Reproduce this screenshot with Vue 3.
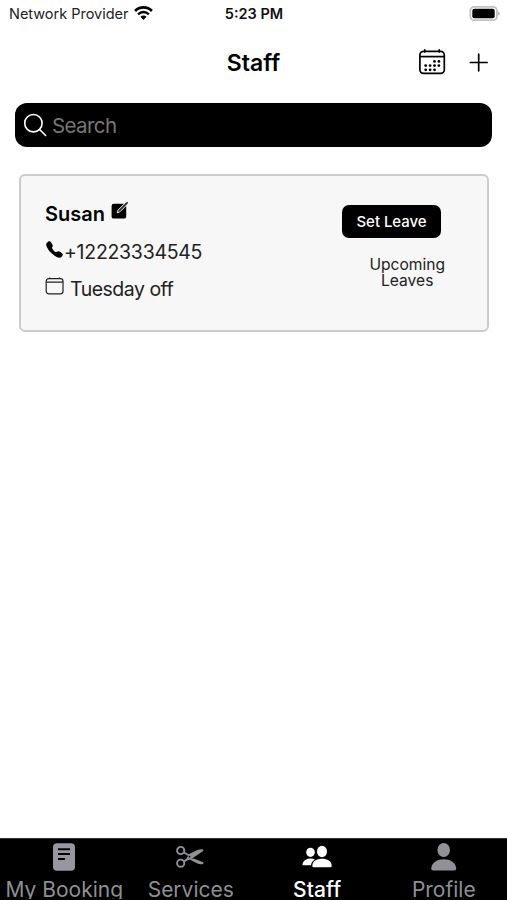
<script setup>
const dots = [
  [16.2, 13], [20.6, 13],
  [7.4, 17.2], [11.8, 17.2], [16.2, 17.2], [20.6, 17.2],
  [7.4, 21.4], [11.8, 21.4], [16.2, 21.4]
]
</script>

<template>
  <div class="screen">
    <div class="status">
      <div class="carrier">
        <span class="carrier-name">Network Provider</span>
        <svg class="wifi" width="19" height="14" viewBox="0 0 18 14">
          <path d="M.6 5A11.600 11.600 0 0 1 17.400 5" fill="none" stroke="#000" stroke-width="2.7" />
          <path d="M3.600 8.300A7.600 7.600 0 0 1 14.400 8.300" fill="none" stroke="#000" stroke-width="2.400" />
          <path d="M6 10.800A4.200 4.200 0 0 1 12 10.800L9 14Z" fill="#000" />
        </svg>
      </div>
      <span class="time">5:23 PM</span>
      <svg class="battery" width="31" height="15" viewBox="0 0 31 15">
        <rect x="1.300" y=".8" width="26.6" height="13.4" rx="4" fill="#fff" stroke="#c2c2c2" stroke-width="1.800" />
        <rect x="3.300" y="2.8" width="22.4" height="9.4" rx="2" fill="#000" />
        <path d="M28.8 5.2Q30.9 6 30.9 7.5T28.8 9.8Z" fill="#b9b9b9" />
      </svg>
    </div>

    <header class="header">
      <h1 class="title">Staff</h1>
      <div class="actions">
        <svg width="28" height="28" viewBox="0 0 28 28">
          <g fill="none" stroke="#000" stroke-width="1.7">
            <rect x="1.900" y="2.400" width="24.4" height="22" rx="3.6" />
            <path d="M1.900 7.600H26.300" />
            <path d="M6.8 .9V3M21.2 .9V3" stroke-linecap="round" />
          </g>
          <circle v-for="(d, i) in dots" :key="i" :cx="d[0] + 0.3" :cy="d[1] - 0.6" r="1.4" />
        </svg>
        <svg width="20" height="20" viewBox="0 0 20 20">
          <path d="M9.700 1.200V17.800M1.300 9.500H18.100" fill="none" stroke="#000" stroke-width="1.700" stroke-linecap="round" />
        </svg>
      </div>
    </header>

    <div class="search">
      <svg width="24" height="24" viewBox="0 0 24 24" fill="none" stroke="#fff" stroke-width="1.6" stroke-linecap="round">
        <circle cx="10.400" cy="10.200" r="8.700" />
        <path d="M16.600 16.500L22.600 22.500" />
      </svg>
      <span class="placeholder">Search</span>
    </div>

    <section class="card">
      <div class="info">
        <div class="name-row">
          <span class="name">Susan</span>
          <svg class="edit" width="18" height="19" viewBox="0 0 18 19">
            <rect x=".6" y="2.8" width="14.6" height="14.8" rx="2.2" />
            <path d="M6.2 11.8L7.2 9L15.4 .8L17.2 2.5L8.9 10.8Z" fill="#333" stroke="#f7f7f7" stroke-width="1" stroke-linejoin="round" />
            <path d="M7.500 10.500L16.800 1.200" stroke="#333" stroke-width="1.100" />
          </svg>
        </div>
        <div class="phone-row">
          <svg class="phone-icon" width="19" height="19" viewBox="0 0 512 512">
            <path d="M391 480c-19.520 0-46.940-7.060-88-30-49.930-28-88.550-53.850-138.210-103.380C116.910 298.770 93.610 267.790 61 208.450c-36.840-67-30.560-102.120-23.540-117.130C45.820 73.380 58.160 62.650 74.110 52a176.300 176.300 0 0 1 28.640-15.200c1-.43 1.930-.84 2.760-1.210 4.950-2.230 12.450-5.600 21.950-2 6.340 2.380 12 7.250 20.860 16 18.170 17.920 43 57.830 52.160 77.430 6.150 13.210 10.220 21.930 10.230 31.710 0 11.450-5.760 20.280-12.750 29.810-1.310 1.790-2.610 3.500-3.870 5.160-7.610 10-9.280 12.890-8.180 18.050 2.230 10.370 18.860 41.240 46.190 68.510s57.310 42.850 67.720 45.070c5.380 1.150 8.330-.59 18.650-8.470 1.480-1.130 3-2.300 4.590-3.470 10.660-7.930 19.080-13.540 30.260-13.540h.06c9.730 0 18.060 4.220 31.860 11.180 18 9.080 59.110 33.590 77.140 51.780 8.770 8.840 13.660 14.480 16.050 20.810 3.600 9.530.21 17-2 22-.37.83-.78 1.740-1.210 2.750a176.490 176.490 0 0 1-15.290 28.580c-10.630 15.900-21.400 28.210-39.380 36.580A67.420 67.420 0 0 1 391 480z" />
          </svg>
          <span class="phone">+12223334545</span>
        </div>
        <div class="off-row">
          <svg class="cal" width="19" height="19" viewBox="0 0 19 19" fill="none" stroke="#222" stroke-width="1.2">
            <rect x="1.200" y="1.700" width="16.8" height="15.2" rx="2.6" />
            <path d="M1.200 5.100H18M4.700 .4V1.900M14.500 .4V1.900" />
          </svg>
          <span class="off">Tuesday off</span>
        </div>
      </div>
      <div class="leave">
        <button class="set">Set Leave</button>
        <div class="upcoming">
          <span>Upcoming</span>
          <span>Leaves</span>
        </div>
      </div>
    </section>

    <nav class="tabs">
      <div class="tab">
        <svg width="30" height="30" viewBox="0 0 30 30">
          <rect x="4" y="1.200" width="22" height="27.600" rx="4" fill="#98979f" />
          <path d="M9.800 7.200H20.200M9.800 12.100H20.200M9.800 17H15.200" stroke="#000" stroke-width="2" stroke-linecap="round" />
        </svg>
        <span class="label">My Booking</span>
      </div>
      <div class="tab">
        <svg width="30" height="30" viewBox="1 0 30 30">
          <g fill="none" stroke="#929198" stroke-width="1.900">
            <circle cx="5.700" cy="8.500" r="3.600" />
            <circle cx="5.700" cy="21.200" r="3.600" />
            <path d="M9 10.500L15 14M9 19.400L14 16.400" />
          </g>
          <path d="M11.500 16.300L14.500 11.800L22.500 8.100Q26 6.800 28.300 7.500L28.200 9.100L16 17.200L12.500 18Z" fill="#929198" />
          <path d="M18.500 16.400L28.300 20.300V21.900Q25.500 22.800 22.500 21.500L14.500 17.600Z" fill="#929198" />
          <circle cx="14.500" cy="14.700" r=".9" fill="#000" />
        </svg>
        <span class="label">Services</span>
      </div>
      <div class="tab active">
        <svg width="30" height="30" viewBox="0 0 30 30">
          <g fill="#fff">
            <ellipse cx="8.500" cy="10.300" rx="4.300" ry="4.600" />
            <path d="M.5 23.300C.5 18.900 4.200 16.400 8.500 16.400C10.300 16.400 11.800 16.800 13 17.400C10.300 19 9.100 21.300 9 23.300Z" />
            <ellipse cx="20" cy="9.500" rx="5" ry="5.700" />
            <path d="M10.300 24C10.300 19.300 14.700 16.800 20 16.800S29.700 19.300 29.700 24Q29.700 25.300 28.200 25.300H11.800Q10.300 25.300 10.300 24Z" />
          </g>
        </svg>
        <span class="label staff">Staff</span>
      </div>
      <div class="tab">
        <svg width="30" height="30" viewBox="0 0 30 30" fill="#929198">
          <ellipse cx="14.700" cy="8" rx="6.300" ry="7" />
          <path d="M2.200 26.500C2.600 20.500 8.200 17.200 14.700 17.200S26.900 20.500 27.200 26.500Q27.200 28.500 25.200 28.500H4.200Q2.200 28.500 2.200 26.500Z" />
        </svg>
        <span class="label">Profile</span>
      </div>
    </nav>
  </div>
</template>

<style>
body {
  margin: 0;
  background: #fff;
}
</style>

<style scoped>
.screen {
  width: 507px;
  height: 900px;
  display: flex;
  flex-direction: column;
  overflow: hidden;
  background: #fff;
  color: #000;
  font-family: Inter, "Liberation Sans", sans-serif;
  white-space: nowrap;
}
svg { display: block; flex: none; }
.status {
  height: 28px;
  display: grid;
  grid-template-columns: 1fr auto 1fr;
  align-items: center;
  box-sizing: border-box;
  padding: 0 7px 2px 9px;
}
.carrier { display: flex; align-items: center; gap: 6px; color: #222; }
.carrier-name { font-size: 14.5px; letter-spacing: -0.02px; }
.time { margin-left: -1px; font-size: 14.5px; font-weight: 600; color: #111; }
.wifi { margin-top: -1px; }
.battery { justify-self: end; }
.header {
  height: 69px;
  display: grid;
  grid-template-columns: 1fr auto 1fr;
  align-items: center;
  padding: 0 18px;
}
.title { grid-column: 2; margin: 0; font-size: 23px; font-weight: 600; letter-spacing: 0; }
.actions { display: flex; justify-content: flex-end; align-items: center; gap: 23px; }
.search {
  height: 44px;
  box-sizing: border-box;
  margin: 6px 15px 0;
  padding-left: 8px;
  display: flex;
  align-items: center;
  gap: 5px;
  border-radius: 12px;
  background: #000;
}
.placeholder { color: #777; font-size: 20.5px; letter-spacing: -0.6px; }
.card {
  box-sizing: border-box;
  height: 158px;
  margin: 27px 18px 0 19px;
  padding: 26px 42px 0 24px;
  display: flex;
  justify-content: space-between;
  border: 2px solid #ccc;
  border-radius: 6px;
  background: #f7f7f7;
}
.name-row, .phone-row, .off-row { display: flex; align-items: center; }
.name-row { height: 24px; gap: 6px; }
.phone-row { height: 24px; margin-top: 14px; }
.off-row { height: 24px; margin-top: 13px; gap: 6px; }
.name { font-size: 20px; font-weight: 600; letter-spacing: 0; }
.phone, .off { font-size: 19.5px; color: #222; }
.phone { letter-spacing: -0.28px; }
.off { letter-spacing: -0.5px; }
.phone-icon { margin-top: -6px; }
.edit { margin-top: -7px; }
.cal { margin-top: -6px; }
.leave { display: flex; flex-direction: column; align-items: flex-start; width: 103px; }
.set {
  width: 99px;
  height: 33px;
  margin-top: 3px;
  padding: 0;
  border: 0;
  border-radius: 7px;
  background: #000;
  color: #fff;
  font: 500 15px Inter, "Liberation Sans", sans-serif;
  letter-spacing: -0.05px;
}
.upcoming {
  display: flex;
  flex-direction: column;
  align-items: center;
  align-self: flex-end;
  margin-top: 19px;
  font-size: 15.6px;
  line-height: 16px;
  color: #222;
}
.tabs {
  height: 61px;
  margin-top: auto;
  padding-left: 1px;
  border-top: 1px solid #333;
  display: grid;
  grid-template-columns: repeat(4, 1fr);
  background: #000;
}
.tab { display: flex; flex-direction: column; align-items: center; padding-top: 3px; color: #8f8f93; }
.tab.active { color: #fff; }
.label {
  height: 26px;
  overflow: hidden;
  margin-top: 1px;
  font-size: 21px;
  line-height: 33px;
}
.staff { font-weight: 500; letter-spacing: 0.1px; }
</style>
